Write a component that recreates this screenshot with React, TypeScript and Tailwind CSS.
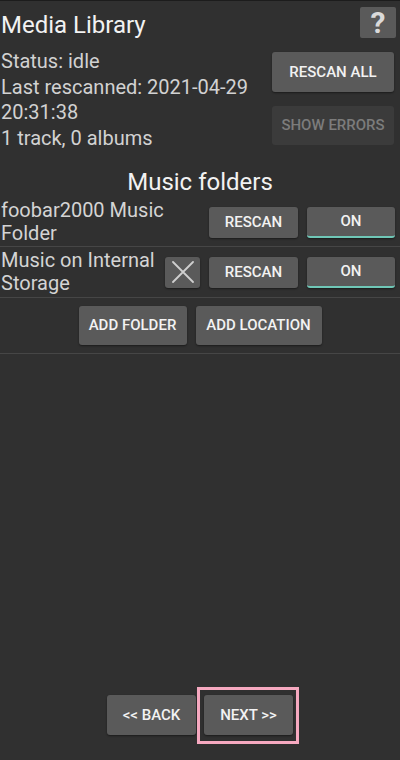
import React from 'react';

const btn =
  'flex items-center justify-center rounded-[3px] bg-[#5a5a5a] text-[15px] font-medium text-[#f2f2f2] shadow-[0_1px_2px_rgba(0,0,0,0.45)]';

const FolderRow: React.FC<{ name: string[]; removable?: boolean; className?: string }> = ({ name, removable, className }) => (
  <div className={`flex items-center border-b border-[#464646] ${className ?? ''}`}>
    <div className="flex-1 pl-[1px] text-[20px] leading-[23px] text-[#d4d4d4]">
      {name.map((l, i) => (
        <div key={i}>{l}</div>
      ))}
    </div>
    <div className="flex items-center gap-[9px] pr-[5px]">
      {removable && (
        <button className={`${btn} h-[31px] w-[35px]`}>
          <svg width="22" height="22" viewBox="0 0 22 22">
            <path d="M1 1 L21 21 M21 1 L1 21" stroke="#cfcfcf" strokeWidth="1.8" strokeLinecap="round" />
          </svg>
        </button>
      )}
      <button className={`${btn} h-[31px] w-[89px]`}>RESCAN</button>
      <button className={`${btn} h-[31px] w-[88px] border-b-2 border-[#6fc7b7]`}>ON</button>
    </div>
  </div>
);

export default function App() {
  return (
    <div
      className="flex h-[760px] w-[400px] flex-col border-t border-[#1c1c1c] bg-[#303030]"
      style={{ fontFamily: 'Roboto, "Noto Sans", sans-serif' }}
    >
      {/* header */}
      <div className="flex h-[46px] items-start justify-between">
        <h1 className="mt-[9px] pl-[1px] text-[24px] leading-[30px] text-[#f2f2f2]">Media Library</h1>
        <button className="mr-[4px] mt-[6px] flex h-[31px] w-[36px] items-center justify-center rounded-[2px] bg-[#5a5a5a] text-[30px] font-bold leading-none text-[#dadada]">
          ?
        </button>
      </div>

      {/* status */}
      <div className="flex justify-between">
        <div className="pl-[1px] pt-[2px] text-[20px] leading-[25.5px] text-[#d2d2d2]">
          <div>Status: idle</div>
          <div>Last rescanned: 2021-04-29</div>
          <div>20:31:38</div>
          <div>1 track, 0 albums</div>
        </div>
        <div className="mr-[6px] mt-[5px] flex flex-col gap-[14px]">
          <button className={`${btn} h-[40px] w-[122px]`}>RESCAN ALL</button>
          <button className="flex h-[39px] w-[122px] items-center justify-center rounded-[3px] bg-[#3b3b3b] text-[15px] font-medium text-[#7c7c7c]">
            SHOW ERRORS
          </button>
        </div>
      </div>

      <h2 className="mt-[17px] text-center text-[24px] leading-[28px] text-[#f2f2f2]">Music folders</h2>

      <FolderRow name={['foobar2000 Music', 'Folder']} className="h-[51px] pt-[2px]" />
      <FolderRow name={['Music on Internal', 'Storage']} removable className="h-[51px]" />

      <div className="flex h-[56px] items-center justify-center gap-[9px] border-b border-[#464646]">
        <button className={`${btn} h-[39px] w-[108px]`}>ADD FOLDER</button>
        <button className={`${btn} h-[39px] w-[126px]`}>ADD LOCATION</button>
      </div>

      <div className="flex-1" />

      <div className="mb-[25px] flex justify-center gap-[8px]">
        <button className={`${btn} h-[40px] w-[89px]`}>&lt;&lt; BACK</button>
        <button className={`${btn} relative h-[40px] w-[89px]`}>
          NEXT &gt;&gt;
          <span className="pointer-events-none absolute -bottom-[9px] -left-[7px] -right-[6px] -top-[8px] border-[3px] border-[#f6a9c0]" />
        </button>
      </div>
    </div>
  );
}
